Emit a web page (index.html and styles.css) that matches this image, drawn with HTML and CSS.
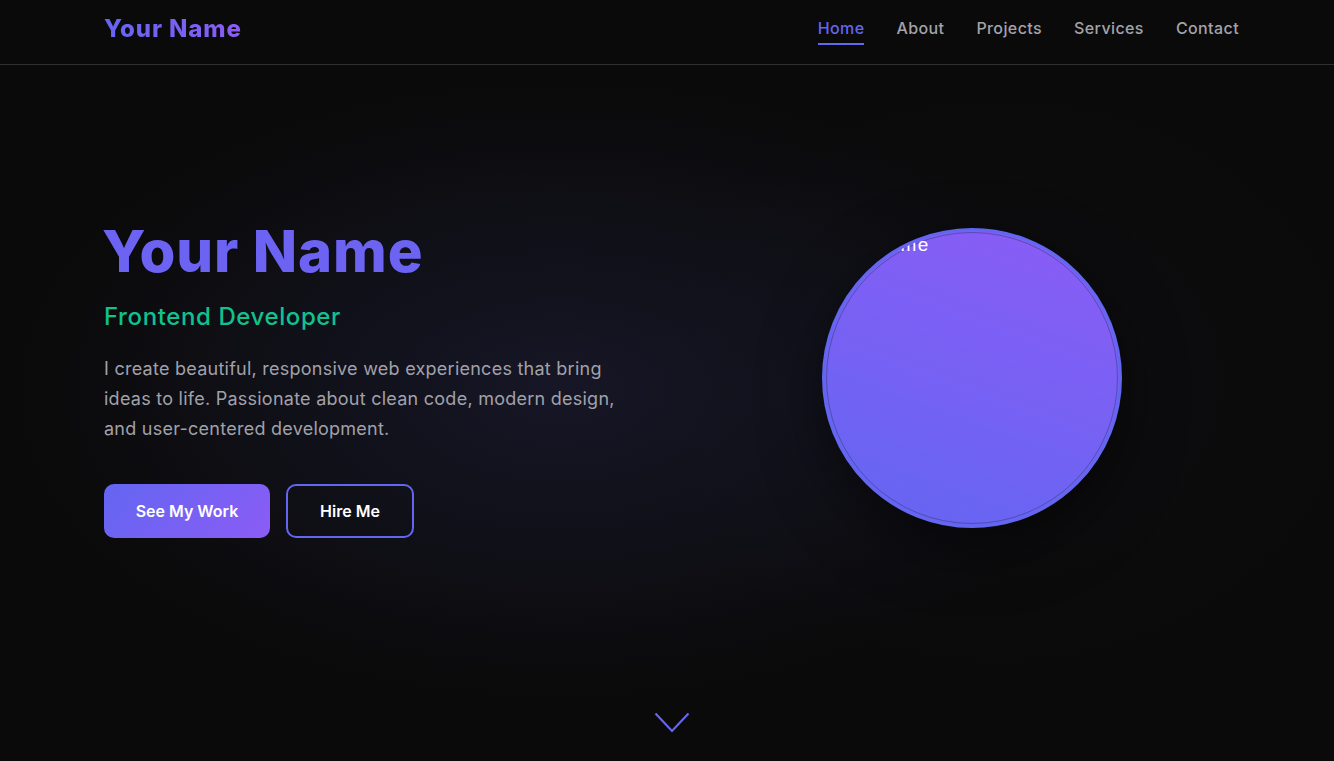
FILE: index.html
```html
<!DOCTYPE html>
<html lang="en">
<head>
<meta charset="utf-8">
<title>Your Name - Portfolio</title>
<link rel="stylesheet" href="styles.css">
</head>
<body>
<header class="site-header">
  <div class="header-inner">
    <a class="logo" href="#">Your Name</a>
    <nav class="nav">
      <a class="nav-link active" href="#">Home</a>
      <a class="nav-link" href="#">About</a>
      <a class="nav-link" href="#">Projects</a>
      <a class="nav-link" href="#">Services</a>
      <a class="nav-link" href="#">Contact</a>
    </nav>
  </div>
</header>
<main>
  <section class="hero">
    <div class="hero-inner">
      <div class="hero-text">
        <h1 class="hero-title">Your Name</h1>
        <h2 class="hero-subtitle">Frontend Developer</h2>
        <p class="hero-desc">I create beautiful, responsive web experiences that bring<br>ideas to life. Passionate about clean code, modern design,<br>and user-centered development.</p>
        <div class="hero-buttons">
          <a class="btn btn-primary" href="#">See My Work</a>
          <a class="btn btn-outline" href="#">Hire Me</a>
        </div>
      </div>
      <div class="hero-visual">
        <div class="avatar">
          <div class="avatar-ring"></div>
          <span class="avatar-alt">Your Name</span>
        </div>
      </div>
    </div>
    <a class="scroll-down" href="#">
      <svg width="36" height="22" viewBox="0 0 36 22" fill="none"><path d="M1.5 1.5 L18 19 L34.5 1.5" stroke="#6366f1" stroke-width="2.2"/></svg>
    </a>
  </section>
</main>
</body>
</html>
```

FILE: styles.css
```css
* { box-sizing: border-box; margin: 0; padding: 0; }
html, body { height: 100%; }
body {
  background: #0a0a0a;
  color: #fff;
  font-family: Inter, "Noto Sans", sans-serif;
  overflow: hidden;
}
a { text-decoration: none; color: inherit; }

.site-header {
  position: fixed;
  top: 0; left: 0; right: 0;
  height: 65px;
  background: #0a0a0a;
  border-bottom: 1px solid #2f2f33;
  z-index: 10;
}
.header-inner {
  height: 64px;
  padding: 0 95px 8px 104px;
  display: flex;
  align-items: center;
  justify-content: space-between;
}
.logo {
  font-size: 24px;
  font-weight: 800;
  color: #6c5ff4;
  letter-spacing: 0.9px;
  background: linear-gradient(90deg, #6366f1, #8b5cf6);
  -webkit-background-clip: text;
  background-clip: text;
  -webkit-text-fill-color: transparent;
}
.nav { display: flex; gap: 32px; }
.nav-link {
  font-size: 16px;
  font-weight: 500;
  color: #a3a3ab;
  letter-spacing: 0.4px;
  position: relative;
  padding: 4px 0;
}
.nav-link.active { color: #6366f1; }
.nav-link.active::after {
  content: "";
  position: absolute;
  left: 0; right: 0;
  bottom: -3px;
  height: 2px;
  background: #6366f1;
}

.hero {
  position: relative;
  height: 100vh;
  display: flex;
  align-items: center;
  padding-top: 6px;
  background:
    radial-gradient(ellipse 760px 430px at 560px 390px, rgba(32, 32, 62, 0.55), transparent 72%),
    radial-gradient(ellipse 520px 420px at 1000px 380px, rgba(40, 40, 70, 0.12), transparent 70%),
    #0a0a0a;
}
.hero-inner {
  width: 100%;
  padding: 0 94px 0 104px;
  display: grid;
  grid-template-columns: 1fr 1fr;
  gap: 64px;
  align-items: center;
}
.hero-title {
  font-size: 58px;
  font-weight: 800;
  line-height: 1.1;
  color: #6c63f2;
  letter-spacing: 0.9px;
  margin-left: -2px;
  margin-top: -9px;
  margin-bottom: 17px;
}
.hero-subtitle {
  font-size: 24px;
  font-weight: 500;
  color: #10c28f;
  letter-spacing: 0.6px;
  line-height: 1.3;
  margin-bottom: 22px;
}
.hero-desc {
  font-size: 18px;
  line-height: 30px;
  color: #a1a1aa;
  letter-spacing: 0.25px;
  margin-bottom: 40px;
}
.hero-buttons { display: flex; gap: 16px; }
.btn {
  display: inline-flex;
  align-items: center;
  justify-content: center;
  height: 54px;
  border-radius: 10px;
  font-size: 16px;
  font-weight: 600;
  color: #fff;
}
.btn-primary {
  width: 166px;
  background: linear-gradient(135deg, #6366f1, #8b5cf6);
}
.btn-outline {
  width: 128px;
  border: 2px solid #6366f1;
  background: transparent;
}

.hero-visual {
  display: flex;
  justify-content: center;
  align-items: center;
  margin-top: -10px;
}
.avatar {
  position: relative;
  width: 300px;
  height: 300px;
  border-radius: 50%;
  border: 3px solid #6366f1;
  background: linear-gradient(200deg, #8b5cf6, #6366f1);
  overflow: hidden;
  box-shadow: 0 20px 60px rgba(0, 0, 0, 0.5);
}
.avatar-ring {
  position: absolute;
  inset: 1px;
  border-radius: 50%;
  border: 1px solid rgba(60, 60, 140, 0.6);
}
.avatar-alt {
  position: absolute;
  left: -3px;
  top: 3px;
  font-family: "Liberation Sans", Arial, sans-serif;
  font-size: 19px;
  letter-spacing: 1.5px;
  white-space: nowrap;
  color: #fff;
}

.scroll-down {
  position: absolute;
  left: calc(50% + 5px);
  bottom: 27px;
  transform: translateX(-50%);
  display: block;
  width: 36px;
  height: 22px;
}
```
